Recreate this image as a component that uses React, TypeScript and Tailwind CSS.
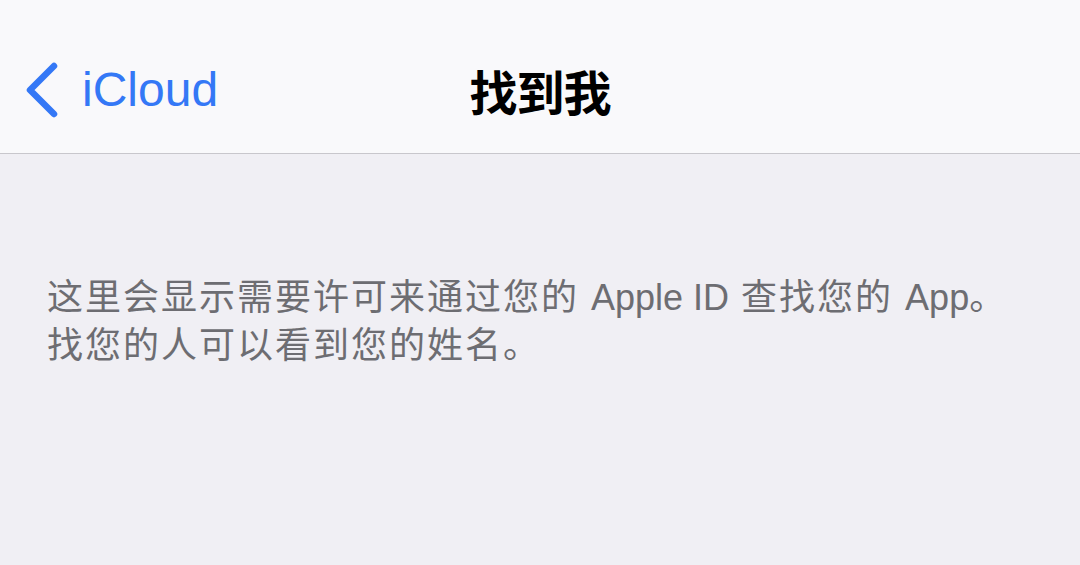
import React from 'react';

const latin = { fontFamily: '"Liberation Sans", "Noto Sans CJK SC", sans-serif' };
const cjk = { fontFamily: '"Noto Sans CJK SC", "Liberation Sans", sans-serif' };

const BackChevron = () => (
  <svg width="36" height="58" viewBox="0 0 36 58" fill="none" className="shrink-0">
    <path d="M30 5 L6 29 L30 53" stroke="#3478f6" strokeWidth="6.5" strokeLinecap="round" strokeLinejoin="round" />
  </svg>
);

export default function App() {
  return (
    <div className="flex h-[565px] w-[1080px] flex-col overflow-hidden bg-[#f0eff4]">
      <header className="grid h-[154px] shrink-0 grid-cols-[1fr_auto_1fr] items-center border-b border-[#c8c7cc] bg-[#f9f9fb] pt-[26px]">
        <div className="flex items-center gap-[22px] pl-[24px]">
          <BackChevron />
          <span className="text-[48px] leading-none text-[#3478f6]" style={latin}>
            iCloud
          </span>
        </div>
        <h1 className="text-[48px] font-bold leading-none tracking-[-1px] text-black" style={cjk}>
          找到我
        </h1>
        <div />
      </header>

      <main className="px-[47px] pt-[120px]">
        <p className="text-[36px] leading-[48px] tracking-[2px] text-[#6d6d72]" style={latin}>
          这里会显示需要许可来通过您的 <span className="tracking-normal">Apple ID</span> 查找您的 <span className="tracking-normal">App</span>。
          <br />
          找您的人可以看到您的姓名。
        </p>
      </main>
    </div>
  );
}
